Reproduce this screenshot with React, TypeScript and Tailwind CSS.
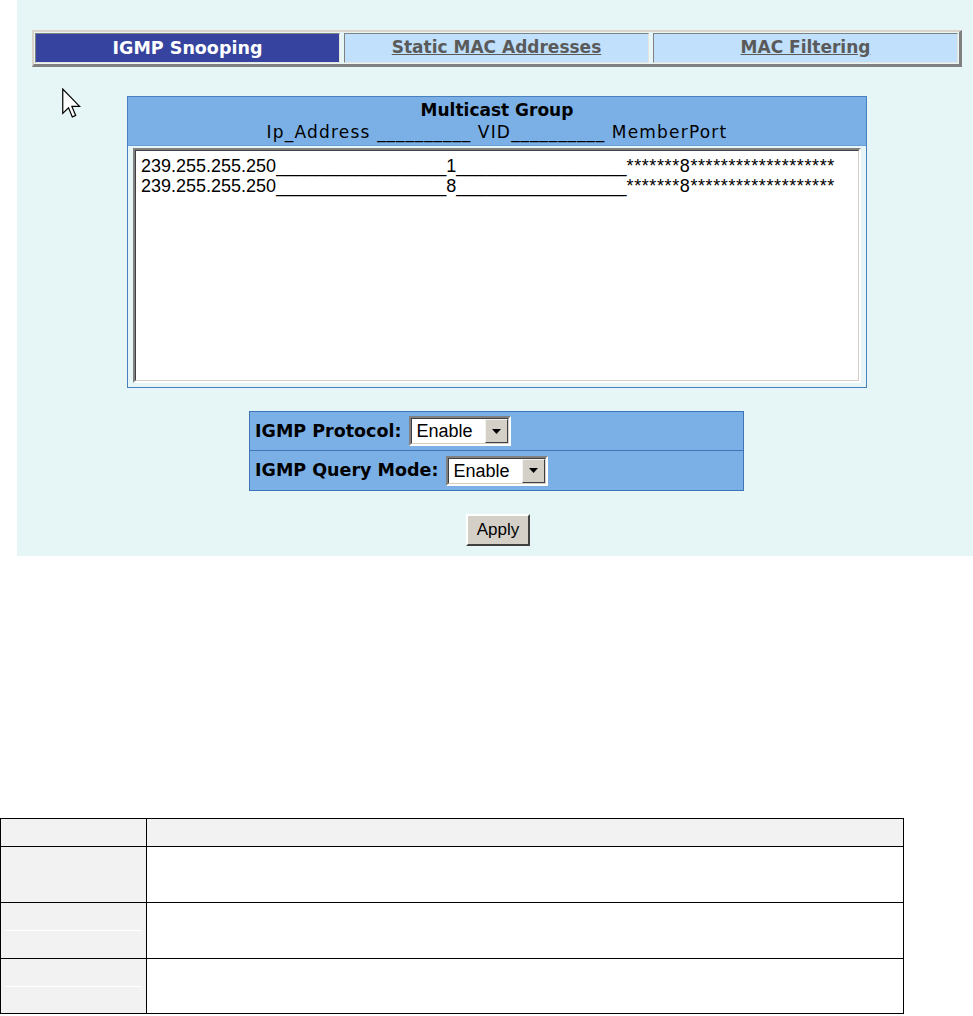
import React from "react";

const sans = { fontFamily: '"Liberation Sans", Arial, sans-serif' };

function Select({ w }: { w: string }) {
  return (
    <div
      className={`${w} h-[30px] flex border-2 border-t-[#808080] border-l-[#808080] border-b-white border-r-white`}
    >
      <div className="flex-1 flex border border-t-[#404040] border-l-[#404040] border-b-[#d4d0c8] border-r-[#d4d0c8] bg-white">
        <div
          className="flex-1 pl-[4px] text-[18px] leading-[24px] text-black"
          style={sans}
        >
          Enable
        </div>
        <div className="w-[23px] flex items-center justify-center bg-[#d4d0c8] border border-t-[#f4f4f4] border-l-[#f4f4f4] border-b-[#404040] border-r-[#404040]">
          <svg width="9" height="5" viewBox="0 0 9 5">
            <path d="M0 0 H9 L4.5 5 Z" fill="#000" />
          </svg>
        </div>
      </div>
    </div>
  );
}

function Row({ vid }: { vid: string }) {
  const u = "_".repeat(17);
  return (
    <div className="h-[20px] leading-[20px] text-[18px] text-black whitespace-nowrap" style={sans}>
      <span>239.255.255.250</span>
      <span>{u}</span>
      <span>{vid}</span>
      <span>{u}</span>
      <span className="tracking-[0.6px]">{"*******8*******************"}</span>
    </div>
  );
}

export default function App() {
  const bold = { fontFamily: '"DejaVu Sans", Verdana, sans-serif' };
  return (
    <div className="w-[973px] h-[1016px] bg-white overflow-hidden">
      <div className="ml-[17px] h-[556px] bg-[#e6f5f5] pt-[30px] relative">
        {/* Tab bar */}
        <div className="ml-[15px] w-[930px] h-[37px] flex gap-[4px] p-[1px] border-t-2 border-l-2 border-r-[3px] border-b-[3px] border-t-[#d8d4cc] border-l-[#d8d4cc] border-r-[#808080] border-b-[#808080]">
          <div className="flex-1 flex items-center justify-center bg-[#3644a0] border border-t-[#808080] border-l-[#808080] border-b-[#e8e4dc] border-r-[#e8e4dc]">
            <span className="text-white font-bold text-[17.5px]" style={bold}>
              IGMP Snooping
            </span>
          </div>
          <div className="flex-1 flex items-center justify-center bg-[#c0e0fc] border border-t-[#808080] border-l-[#808080] border-b-[#e8e4dc] border-r-[#e8e4dc]">
            <span className="text-[#5a5a5a] font-bold underline text-[17px]" style={bold}>
              Static MAC Addresses
            </span>
          </div>
          <div className="flex-1 flex items-center justify-center bg-[#c0e0fc] border border-t-[#808080] border-l-[#808080] border-b-[#e8e4dc] border-r-[#e8e4dc]">
            <span className="text-[#5a5a5a] font-bold underline text-[17px]" style={bold}>
              MAC Filtering
            </span>
          </div>
        </div>

        {/* Cursor */}
        <svg
          className="absolute left-[45px] top-[88px]"
          width="19"
          height="31"
          viewBox="0 0 12.5 20"
        >
          <path
            d="M0.5 0.5 L0.5 16.5 L4.3 12.8 L6.8 18.8 L9 17.9 L6.5 11.9 L11.6 11.9 Z"
            fill="#fff"
            stroke="#000"
            strokeWidth="0.8"
            strokeLinejoin="miter"
          />
        </svg>

        {/* Multicast group box */}
        <div className="mt-[29px] ml-[110px] w-[740px] h-[292px] flex flex-col border border-[#4a80c0] bg-[#e6f5f5]">
          <div className="h-[49px] bg-[#7bb0e6] border-b border-[#6a9fd6] flex flex-col items-center pt-[3px]">
            <div className="text-[17px] font-bold leading-[21px] text-black" style={bold}>
              Multicast Group
            </div>
            <div className="text-[17px] leading-[22px] tracking-[1.2px] text-black whitespace-nowrap" style={bold}>
              Ip_Address <span className="tracking-[0.9px]">__________</span> VID<span className="tracking-[0.9px]">__________</span> MemberPort
            </div>
          </div>
          <div className="flex-1 px-[5px] pt-[2px] pb-[4px]">
            <div className="h-full border-2 border-t-[#808080] border-l-[#808080] border-b-white border-r-white">
              <div className="h-full border border-t-[#404040] border-l-[#404040] border-b-[#d4d0c8] border-r-[#d4d0c8] bg-white pl-[5px] pt-[5px]">
                <Row vid="1" />
                <Row vid="8" />
              </div>
            </div>
          </div>
        </div>

        {/* IGMP settings */}
        <div className="mt-[23px] ml-[232px] w-[495px] border border-[#3f74b8] bg-[#7bb0e6]">
          <div className="h-[39px] flex items-center pl-[5px] gap-[8px] border-b border-[#3f74b8]">
            <span className="font-bold text-[17.5px] text-black" style={bold}>
              IGMP Protocol:
            </span>
            <Select w="w-[102px]" />
          </div>
          <div className="h-[39px] flex items-center pl-[5px] gap-[8px]">
            <span className="font-bold text-[17.5px] text-black" style={bold}>
              IGMP Query Mode:
            </span>
            <Select w="w-[102px]" />
          </div>
        </div>

        {/* Apply */}
        <div className="mt-[23px] ml-[449px]">
          <button
            className="w-[64px] h-[32px] bg-[#d4d0c8] text-[17px] text-black border-2 border-t-white border-l-white border-b-[#404040] border-r-[#404040]"
            style={sans}
          >
            Apply
          </button>
        </div>
      </div>

      {/* Bottom table */}
      <div className="mt-[262px] w-[904px] border border-black">
        <div className="h-[28px] flex bg-[#f2f2f2] border-b border-black">
          <div className="w-[146px] border-r border-black" />
          <div className="flex-1" />
        </div>
        <div className="h-[56px] flex border-b border-black">
          <div className="w-[146px] bg-[#f2f2f2] border-r border-black" />
          <div className="flex-1 bg-white" />
        </div>
        <div className="h-[56px] flex border-b border-black">
          <div className="w-[146px] bg-[#f2f2f2] border-r border-black flex flex-col">
            <div className="h-[27px]" />
            <div className="h-px mx-[4px] bg-white" />
          </div>
          <div className="flex-1 bg-white" />
        </div>
        <div className="h-[54px] flex">
          <div className="w-[146px] bg-[#f2f2f2] border-r border-black flex flex-col">
            <div className="h-[27px]" />
            <div className="h-px mx-[4px] bg-white" />
          </div>
          <div className="flex-1 bg-white" />
        </div>
      </div>
    </div>
  );
}
